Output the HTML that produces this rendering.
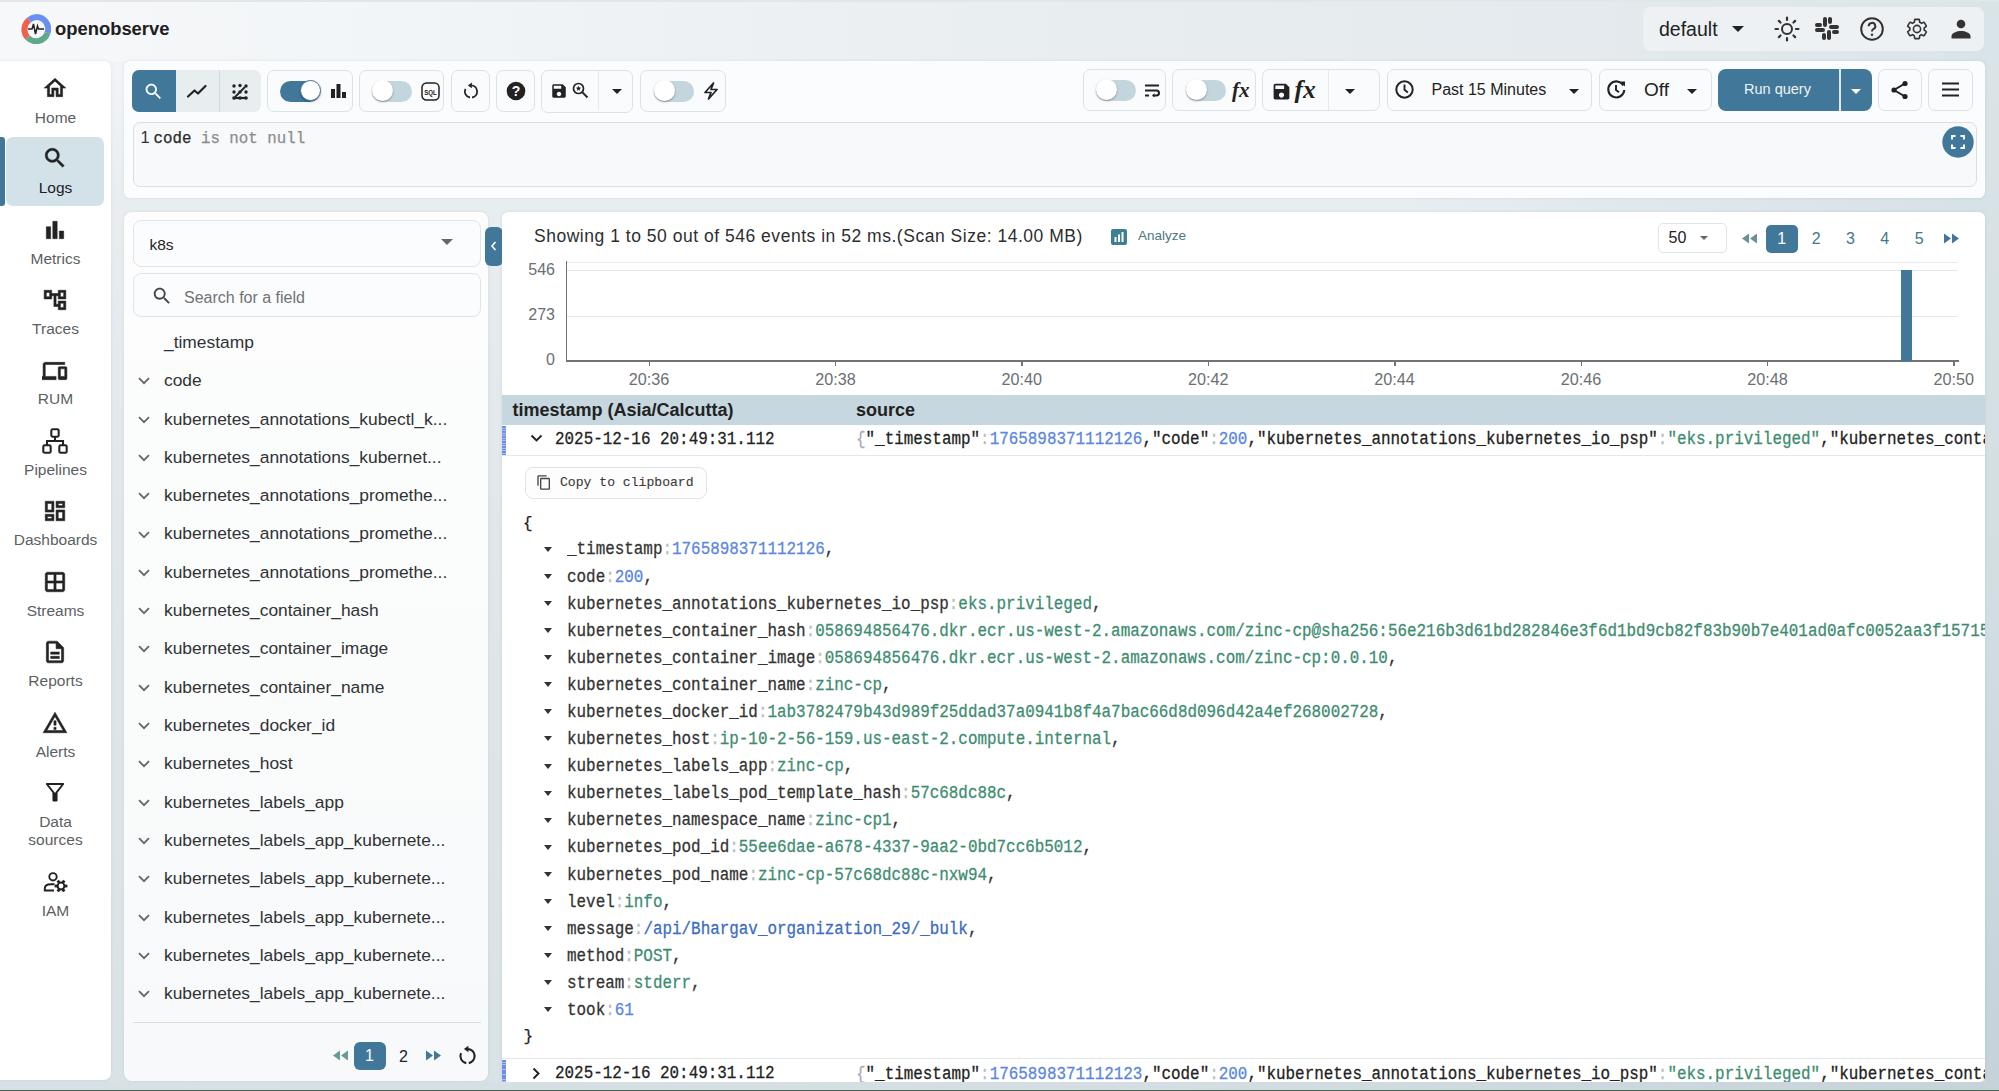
<!DOCTYPE html>
<html><head><meta charset="utf-8">
<style>
*{box-sizing:border-box;margin:0;padding:0}
html,body{width:1999px;height:1091px;overflow:hidden}
body{position:relative;background:linear-gradient(90deg,rgba(214,225,230,0) 70%,rgba(214,225,230,1) 100%),linear-gradient(180deg,#f7f9fa 0,#f2f5f7 60px,#e8edf0 200px,#e1e7ea 500px,#d9e2e6 1091px);font-family:"Liberation Sans",sans-serif;color:#222}
.a{position:absolute}
.mono{font-family:"Liberation Mono",monospace;-webkit-text-stroke:0.25px currentColor}
#hdr{left:0;top:0;width:1999px;height:61px;background:linear-gradient(90deg,#f6f8fa 0%,#f2f5f7 20%,#edf1f3 35%,#e8edf0 55%,#e4eaed 80%,#d9e4e9 100%);border-top:2px solid #e1e6e9}
#nav{left:0;top:60.5px;width:111px;height:1019.5px;background:#fff;border-radius:0 7px 7px 0;box-shadow:0 0 3px rgba(60,80,90,.12)}
.ni{position:absolute;left:0;width:111px;text-align:center;font-size:15.5px;color:#5c5f62}
.ni svg{position:absolute;left:45px;width:21px;height:21px}
#tb{left:124px;top:60.5px;width:1861px;height:137px;background:#fbfcfd;border-radius:6px;box-shadow:0 0 3px rgba(60,80,90,.12)}
.btn{position:absolute;top:70px;height:42px;border:1px solid #dbe3e7;border-radius:7px;background:#fafbfc}
#qe{left:133px;top:122px;width:1844px;height:65px;border:1.5px solid #d9e0e4;border-radius:7px;background:#f8f9fb}
#fp{left:124px;top:212px;width:364px;height:869px;background:linear-gradient(180deg,#fdfdfd 0%,#fbfcfc 35%,#f8f9fa 100%);border-radius:8px;box-shadow:0 0 3px rgba(60,80,90,.12)}
#rp{left:502px;top:211.5px;width:1483px;height:870.5px;background:#fff;border-radius:6px;box-shadow:0 0 3px rgba(60,80,90,.12)}
.fl{position:absolute;left:164px;font-size:17.4px;color:#303336;white-space:nowrap}
.chev{position:absolute;left:138px;width:12px;height:8px}
.tog{position:absolute;width:40px;height:21px;border-radius:11px;background:#c3d6de}
.tog .k{position:absolute;top:-0.5px;width:21px;height:21px;border-radius:50%;background:#fff;box-shadow:0 1px 2px rgba(0,0,0,.35)}
.jl{position:absolute;left:567px;max-width:1418px;overflow:hidden;font-size:15.92px;transform:scaleY(1.1);transform-origin:0 13.7px;white-space:pre;color:#333}
.jl .c{color:#b9bec2}
.jl .n{color:#5a86e0}
.jl .s{color:#3d8c70}
.jl .m{color:#3b6cc4}
.car{position:absolute;left:544px;width:0;height:0;border-left:4.5px solid transparent;border-right:4.5px solid transparent;border-top:5px solid #333}
</style></head><body>

<!-- header -->
<div id="hdr" class="a"></div>
<svg class="a" style="left:21px;top:14px" width="30" height="30" viewBox="0 0 30 30">
  <path d="M15 3 A12 12 0 0 1 26.5 19" stroke="#6b8ff0" stroke-width="6" fill="none"/>
  <path d="M26.5 19 A12 12 0 0 1 6.5 23.5" stroke="#5fa88a" stroke-width="6" fill="none"/>
  <path d="M6.5 23.5 A12 12 0 0 1 8 6" stroke="#f0604a" stroke-width="6" fill="none"/>
  <path d="M8 6 A12 12 0 0 1 15 3" stroke="#6b8ff0" stroke-width="6" fill="none"/>
  <path d="M7 15 H11 L12.5 10 L14.5 20 L16.5 12 L17.5 15 H23" stroke="#222" stroke-width="1.5" fill="none"/>
</svg>
<div class="a" style="left:55px;top:17.5px;font-size:18.4px;font-weight:bold;color:#1e2022;letter-spacing:0px">openobserve</div>

<div class="a" style="left:1643px;top:7px;width:341px;height:44px;background:#edf1f3;border-radius:8px"></div>
<div class="a" style="left:1659px;top:17.5px;font-size:19.5px;color:#222">default</div>
<div class="a" style="left:1732px;top:26px;width:0;height:0;border-left:6px solid transparent;border-right:6px solid transparent;border-top:6px solid #222"></div>

<svg class="a" style="left:1773.5px;top:16px" width="26" height="26" viewBox="0 0 26 26"><circle cx="13" cy="13" r="5" stroke="#333" stroke-width="2" fill="none"/><g stroke="#333" stroke-width="2.2" stroke-linecap="round"><path d="M13 1.5v2.5M13 22v2.5M1.5 13h2.5M22 13h2.5M4.9 4.9l1.6 1.6M19.5 19.5l1.6 1.6M4.9 21.1l1.6-1.6M19.5 6.5l1.6-1.6"/></g></svg>
<svg class="a" style="left:1815px;top:17px" width="24" height="23" viewBox="0 0 24 23" fill="#333"><rect x="8" y="0" width="4" height="10" rx="2"/><rect x="13" y="0" width="4" height="7" rx="2"/><rect x="14" y="8" width="10" height="4" rx="2"/><rect x="17" y="13" width="7" height="4" rx="2"/><rect x="12" y="13" width="4" height="10" rx="2"/><rect x="7" y="16" width="4" height="7" rx="2"/><rect x="0" y="11" width="10" height="4" rx="2"/><rect x="0" y="6" width="7" height="4" rx="2"/></svg>
<svg class="a" style="left:1860px;top:16.5px" width="24" height="24" viewBox="0 0 24 24"><circle cx="12" cy="12" r="10.8" stroke="#333" stroke-width="2" fill="none"/><path d="M8.7 9.2a3.3 3.3 0 1 1 4.6 3c-1 .5-1.3 1-1.3 2.3" stroke="#333" stroke-width="2" fill="none"/><circle cx="12" cy="17.8" r="1.2" fill="#333"/></svg>
<svg class="a" style="left:1904.5px;top:16.5px" width="24" height="24" viewBox="0 0 24 24"><path d="M19.14 12.94c.04-.3.06-.61.06-.94 0-.32-.02-.64-.07-.94l2.03-1.58c.18-.14.23-.41.12-.61l-1.92-3.32c-.12-.22-.37-.29-.59-.22l-2.39.96c-.5-.38-1.03-.7-1.62-.94l-.36-2.54c-.04-.24-.24-.41-.48-.41h-3.84c-.24 0-.43.17-.47.41l-.36 2.54c-.59.24-1.13.57-1.62.94l-2.39-.96c-.22-.08-.47 0-.59.22L2.74 8.87c-.12.21-.08.47.12.61l2.03 1.58c-.05.3-.09.63-.09.94s.02.64.07.94l-2.03 1.58c-.18.14-.23.41-.12.61l1.92 3.32c.12.22.37.29.59.22l2.39-.96c.5.38 1.03.7 1.62.94l.36 2.54c.05.24.24.41.48.41h3.84c.24 0 .44-.17.47-.41l.36-2.54c.59-.24 1.13-.56 1.62-.94l2.39.96c.22.08.47 0 .59-.22l1.92-3.32c.12-.22.07-.47-.12-.61l-2.01-1.58zM12 15.6c-1.98 0-3.6-1.62-3.6-3.6s1.62-3.6 3.6-3.6 3.6 1.62 3.6 3.6-1.62 3.6-3.6 3.6z" stroke="#333" stroke-width="1.6" fill="none"/></svg>
<svg class="a" style="left:1950.5px;top:19px" width="20" height="20" viewBox="0 0 20 20" fill="#333"><circle cx="10" cy="5" r="4.3"/><path d="M0.5 19.5v-2.5c0-3 5.5-5 9.5-5s9.5 2 9.5 5v2.5z"/></svg>

<div class="a" style="left:1985px;top:61px;width:14px;height:1030px;background:linear-gradient(180deg,#d9e3e8 0%,#d3dee3 50%,#c4d2d9 100%)"></div>
<!-- nav -->
<div id="nav" class="a"></div>
<div class="a" style="left:6px;top:137px;width:98px;height:69px;background:#d3e2e9;border-radius:7px"></div>
<div class="a" style="left:0;top:137px;width:5px;height:69px;background:#41789a;border-radius:0 3px 3px 0"></div>

<svg class="a" style="left:42px;top:75.0px" width="26" height="26" viewBox="0 0 24 24" fill="#222" stroke="#222" stroke-width="0.5"><path d="M12 5.69l5 4.5V18h-2v-6H9v6H7v-7.81l5-4.5M12 3L2 12h3v8h6v-6h2v6h6v-8h3L12 3z"/></svg>
<div class="a" style="left:0;width:111px;text-align:center;top:108.8px;font-size:15.5px;line-height:18px;color:#5c5f62">Home</div>
<svg class="a" style="left:42px;top:145.0px" width="26" height="26" viewBox="0 0 24 24" fill="#222" stroke="#222" stroke-width="0.5"><path d="M15.5 14h-.79l-.28-.27C15.41 12.59 16 11.11 16 9.5 16 5.91 13.09 3 9.5 3S3 5.91 3 9.5 5.91 16 9.5 16c1.61 0 3.09-.59 4.23-1.57l.27.28v.79l5 4.99L20.49 19l-4.99-5zm-6 0C7.01 14 5 11.99 5 9.5S7.01 5 9.5 5 14 7.01 14 9.5 11.99 14 9.5 14z"/></svg>
<div class="a" style="left:0;width:111px;text-align:center;top:179.2px;font-size:15.5px;line-height:18px;color:#1f2124">Logs</div>
<svg class="a" style="left:42px;top:216.5px" width="26" height="26" viewBox="0 0 24 24" fill="#222" stroke="#222" stroke-width="0.5"><path d="M4 9h4v11H4zM16 13h4v7h-4zM10 4h4v16h-4z"/></svg>
<div class="a" style="left:0;width:111px;text-align:center;top:249.8px;font-size:15.5px;line-height:18px;color:#5c5f62">Metrics</div>
<svg class="a" style="left:42px;top:287.0px" width="26" height="26" viewBox="0 0 24 24" fill="#222" stroke="#222" stroke-width="0.5"><path d="M22 11V3h-7v3H9V3H2v8h7V8h2v10h4v3h7v-8h-7v3h-2V8h2v3h7zM7 9H4V5h3v4zm10 6h3v4h-3v-4zm0-10h3v4h-3V5z"/></svg>
<div class="a" style="left:0;width:111px;text-align:center;top:319.8px;font-size:15.5px;line-height:18px;color:#5c5f62">Traces</div>
<svg class="a" style="left:42px;top:357.5px" width="26" height="26" viewBox="0 0 24 24" fill="#222" stroke="#222" stroke-width="0.5"><path d="M3 6h18V4H3c-1.1 0-2 .9-2 2v11H-1v3h14v-3H3V6zm19 2h-6c-.55 0-1 .45-1 1v10c0 .55.45 1 1 1h6c.55 0 1-.45 1-1V9c0-.55-.45-1-1-1zm-1 9h-4v-7h4v7z"/></svg>
<div class="a" style="left:0;width:111px;text-align:center;top:390.3px;font-size:15.5px;line-height:18px;color:#5c5f62">RUM</div>
<svg class="a" style="left:42px;top:428.0px" width="26" height="26" viewBox="0 0 24 24" fill="#222" stroke="#222" stroke-width="0.5"><g fill="none" stroke-width="1.9"><rect x="8.6" y="1.2" width="6.8" height="6.8" rx="1.2"/><rect x="1.2" y="16" width="6.8" height="6.8" rx="1.2"/><rect x="16" y="16" width="6.8" height="6.8" rx="1.2"/><path d="M12 8v4M4.6 16v-4h14.8v4"/></g></svg>
<div class="a" style="left:0;width:111px;text-align:center;top:460.8px;font-size:15.5px;line-height:18px;color:#5c5f62">Pipelines</div>
<svg class="a" style="left:42px;top:498.0px" width="26" height="26" viewBox="0 0 24 24" fill="#222" stroke="#222" stroke-width="0.5"><path d="M19 5v2h-4V5h4M9 5v6H5V5h4m10 8v6h-4v-6h4M9 17v2H5v-2h4M21 3h-8v6h8V3zM11 3H3v10h8V3zm10 8h-8v10h8V11zm-10 4H3v6h8v-6z"/></svg>
<div class="a" style="left:0;width:111px;text-align:center;top:531.3px;font-size:15.5px;line-height:18px;color:#5c5f62">Dashboards</div>
<svg class="a" style="left:42px;top:569.0px" width="26" height="26" viewBox="0 0 24 24" fill="#222" stroke="#222" stroke-width="0.5"><path d="M5 3h14c1.1 0 2 .9 2 2v14c0 1.1-.9 2-2 2H5c-1.1 0-2-.9-2-2V5c0-1.1.9-2 2-2zm0 2v6h6V5zm8 0v6h6V5zm-8 8v6h6v-6zm8 0v6h6v-6z"/></svg>
<div class="a" style="left:0;width:111px;text-align:center;top:601.8px;font-size:15.5px;line-height:18px;color:#5c5f62">Streams</div>
<svg class="a" style="left:42px;top:639.0px" width="26" height="26" viewBox="0 0 24 24" fill="#222" stroke="#222" stroke-width="0.5"><path d="M8 16h8v2H8zm0-4h8v2H8zm6-10H6c-1.1 0-2 .9-2 2v16c0 1.1.89 2 1.99 2H18c1.1 0 2-.9 2-2V8l-6-6zm4 18H6V4h7v5h5v11z"/></svg>
<div class="a" style="left:0;width:111px;text-align:center;top:672.3px;font-size:15.5px;line-height:18px;color:#5c5f62">Reports</div>
<svg class="a" style="left:42px;top:709.5px" width="26" height="26" viewBox="0 0 24 24" fill="#222" stroke="#222" stroke-width="0.5"><path d="M12 5.99L19.53 19H4.47L12 5.99M12 2L1 21h22L12 2zm1 14h-2v2h2v-2zm0-6h-2v4h2v-4z"/></svg>
<div class="a" style="left:0;width:111px;text-align:center;top:742.8px;font-size:15.5px;line-height:18px;color:#5c5f62">Alerts</div>
<svg class="a" style="left:44px;top:781px" width="22" height="22" viewBox="0 0 22 22"><path d="M2.8 3 H19.2 L12.6 11.4 V19.5 H9.4 V11.4 Z" stroke="#222" stroke-width="1.9" stroke-linejoin="round" fill="none"/><rect x="9.4" y="11.5" width="3.2" height="8.2" fill="#222"/></svg>
<div class="a" style="left:0;width:111px;text-align:center;top:813.3px;font-size:15.5px;line-height:18px;color:#5c5f62">Data</div>
<div class="a" style="left:0;width:111px;text-align:center;top:831.3px;font-size:15.5px;line-height:18px;color:#5c5f62">sources</div>
<svg class="a" style="left:40px;top:868px" width="30" height="28" viewBox="0 0 30 28"><circle cx="13" cy="8.8" r="3.7" stroke="#222" stroke-width="1.9" fill="none"/><path d="M14.5 16.2 H11 C7 16.2 4.8 18 4.8 20.5 V22.5 H14" stroke="#222" stroke-width="1.9" fill="none"/><circle cx="21" cy="18" r="3.4" stroke="#222" stroke-width="2" fill="none"/><g fill="#222"><rect x="19.6" y="11.6" width="2.8" height="2.8" transform="rotate(90 21 18)"/><rect x="19.6" y="11.6" width="2.8" height="2.8" transform="rotate(150 21 18)"/><rect x="19.6" y="11.6" width="2.8" height="2.8" transform="rotate(210 21 18)"/><rect x="19.6" y="11.6" width="2.8" height="2.8" transform="rotate(270 21 18)"/><rect x="19.6" y="11.6" width="2.8" height="2.8" transform="rotate(330 21 18)"/><rect x="19.6" y="11.6" width="2.8" height="2.8" transform="rotate(390 21 18)"/></g></svg>
<div class="a" style="left:0;width:111px;text-align:center;top:902.3px;font-size:15.5px;line-height:18px;color:#5c5f62">IAM</div>

<!-- toolbar panel -->
<div id="tb" class="a"></div>
<div id="qe" class="a"></div>
<div class="a" style="left:140.5px;top:127.5px;font-size:16.5px;line-height:19px;color:#333">1</div><div class="a mono" style="left:153.5px;top:129.5px;font-size:15.8px;line-height:18px;color:#2a2a2a;white-space:pre">code <span style="color:#8a8d90">is not null</span></div>


<!-- toolbar buttons -->
<div class="a" style="left:132px;top:70px;width:129px;height:42px;background:#e8edf0;border-radius:7px;overflow:hidden">
  <div class="a" style="left:0;top:0;width:43.5px;height:42px;background:#41789a"></div>
  <div class="a" style="left:87px;top:0;width:1px;height:42px;background:#cfd8dc"></div>
</div>
<svg class="a" style="left:143px;top:81px" width="21" height="21" viewBox="0 0 24 24" fill="#fff"><path d="M15.5 14h-.79l-.28-.27C15.41 12.59 16 11.11 16 9.5 16 5.91 13.09 3 9.5 3S3 5.91 3 9.5 5.91 16 9.5 16c1.61 0 3.09-.59 4.23-1.57l.27.28v.79l5 4.99L20.49 19l-4.99-5zm-6 0C7.01 14 5 11.99 5 9.5S7.01 5 9.5 5 14 7.01 14 9.5 11.99 14 9.5 14z"/></svg>
<svg class="a" style="left:186px;top:83px" width="22" height="16" viewBox="0 0 22 16"><path d="M2 13.5 L8.5 7.5 L12 10.5 L19.5 3" stroke="#222" stroke-width="2.2" fill="none" stroke-linecap="round" stroke-linejoin="round"/></svg>
<svg class="a" style="left:231px;top:83px" width="18" height="17" viewBox="0 0 18 17" fill="#222"><circle cx="3" cy="3" r="1.7"/><circle cx="9" cy="2.5" r="1.7"/><circle cx="15" cy="3" r="1.7"/><circle cx="3" cy="9" r="1.7"/><circle cx="9" cy="9" r="1.7"/><circle cx="15" cy="9" r="1.7"/><path d="M2 15 H16" stroke="#222" stroke-width="2.2"/><path d="M4 14 L14 4" stroke="#222" stroke-width="1.8"/><circle cx="3" cy="15" r="1.8"/><circle cx="9" cy="15" r="1.8"/><circle cx="15" cy="15" r="1.8"/></svg>

<div class="btn" style="left:267px;width:86px;height:42px"></div>
<div class="tog" style="left:280px;top:80.5px;background:#41789a"><div class="k" style="left:19.5px;border:1px solid #41789a"></div></div>
<svg class="a" style="left:331px;top:84px" width="15" height="14" viewBox="0 0 15 14" fill="#222"><rect x="0" y="5" width="4" height="9"/><rect x="5.5" y="0" width="4" height="14"/><rect x="11" y="8" width="4" height="6"/></svg>

<div class="btn" style="left:359px;width:85px"></div>
<div class="tog" style="left:372px;top:80.5px"><div class="k" style="left:0"></div></div>
<svg class="a" style="left:421px;top:82px" width="19" height="19" viewBox="0 0 19 19"><rect x="1" y="1" width="17" height="17" rx="4.5" stroke="#222" stroke-width="1.5" fill="none"/><text x="3.2" y="12.6" font-family="Liberation Sans" font-weight="bold" font-size="7.2" textLength="12.6" lengthAdjust="spacingAndGlyphs" fill="#222">SQL</text></svg>

<div class="btn" style="left:451px;width:39px"></div>
<svg class="a" style="left:462px;top:82px" width="18" height="18" viewBox="0 0 18 18"><path d="M9.00 3.40 A6.1 6.1 0 0 1 10.06 15.51 M7.94 15.51 A6.1 6.1 0 0 1 3.47 6.92" stroke="#222" stroke-width="1.8" fill="none"/><path d="M5.9 3.4 L9.8 0.6 L9.8 6.2Z" fill="#222"/></svg>

<div class="btn" style="left:496px;width:39px"></div>
<svg class="a" style="left:506px;top:81px" width="20" height="20" viewBox="0 0 20 20"><circle cx="10" cy="10" r="9.3" fill="#222"/><text x="10" y="15" font-family="Liberation Sans" font-weight="bold" font-size="14" text-anchor="middle" fill="#fff">?</text></svg>

<div class="btn" style="left:541px;width:92px;top:69.5px;height:43px"></div>
<div class="a" style="left:598px;top:71px;width:1px;height:40px;background:#e3e9ec"></div>
<svg class="a" style="left:550px;top:82px" width="18" height="18" viewBox="0 0 24 24" fill="#222"><path d="M17 3H5c-1.11 0-2 .9-2 2v14c0 1.1.89 2 2 2h14c1.1 0 2-.9 2-2V7l-4-4zm-5 16c-1.66 0-3-1.34-3-3s1.34-3 3-3 3 1.34 3 3-1.34 3-3 3zm3-10H5V5h10v4z"/></svg>
<svg class="a" style="left:572px;top:82px" width="17" height="17" viewBox="0 0 17 17"><circle cx="6.5" cy="6.5" r="5" stroke="#222" stroke-width="1.7" fill="none"/><path d="M10.2 10.2 L15.5 15.5" stroke="#222" stroke-width="1.9"/><path d="M6.5 3.8 L7.3 5.6 L9.2 5.7 L7.7 6.9 L8.2 8.8 L6.5 7.8 L4.8 8.8 L5.3 6.9 L3.8 5.7 L5.7 5.6Z" fill="#222"/></svg>
<div class="a" style="left:611.5px;top:89px;width:0;height:0;border-left:5px solid transparent;border-right:5px solid transparent;border-top:5px solid #222"></div>

<div class="btn" style="left:640px;width:86px"></div>
<div class="tog" style="left:653.5px;top:80.5px"><div class="k" style="left:0"></div></div>
<svg class="a" style="left:703px;top:82px" width="16" height="18" viewBox="0 0 16 18"><path d="M10.5 1 L2 10.5 H8 L5.5 17 L14 7.5 H8 Z" stroke="#222" stroke-width="1.7" fill="none" stroke-linejoin="round"/></svg>

<!-- right side -->
<div class="btn" style="left:1083px;width:83px;top:69px;height:41.5px"></div>
<div class="tog" style="left:1096px;top:79.5px"><div class="k" style="left:0"></div></div>
<svg class="a" style="left:1144px;top:84px" width="16" height="13" viewBox="0 0 16 13"><path d="M1 1.5 H15 M1 6.5 H12.5 a2.5 2.5 0 0 1 0 5 H9.5 M1 11.5 H5" stroke="#222" stroke-width="2" fill="none"/><path d="M10.5 9.3 L8 11.5 L10.5 13.7Z" fill="#222"/></svg>

<div class="btn" style="left:1172px;width:84px;top:69px;height:41.5px"></div>
<div class="tog" style="left:1185.5px;top:79.5px"><div class="k" style="left:0"></div></div>
<div class="a" style="left:1232px;top:78px;font-family:'Liberation Serif',serif;font-style:italic;font-weight:bold;font-size:21px;color:#222;line-height:24px">fx</div>

<div class="btn" style="left:1262px;width:118px;top:69px;height:41.5px"></div>
<div class="a" style="left:1327.5px;top:70px;width:1px;height:40px;background:#e3e9ec"></div>
<svg class="a" style="left:1271px;top:81px" width="21" height="21" viewBox="0 0 24 24" fill="#222"><path d="M17 3H5c-1.11 0-2 .9-2 2v14c0 1.1.89 2 2 2h14c1.1 0 2-.9 2-2V7l-4-4zm-5 16c-1.66 0-3-1.34-3-3s1.34-3 3-3 3 1.34 3 3-1.34 3-3 3zm3-10H5V5h10v4z"/></svg>
<div class="a" style="left:1294.5px;top:75.5px;font-family:'Liberation Serif',serif;font-style:italic;font-weight:bold;font-size:25.5px;color:#222;line-height:27px">fx</div>
<div class="a" style="left:1345px;top:89px;width:0;height:0;border-left:5px solid transparent;border-right:5px solid transparent;border-top:5px solid #222"></div>

<div class="btn" style="left:1386.5px;width:205.5px;top:69px;height:41.8px"></div>
<svg class="a" style="left:1395px;top:80px" width="19" height="19" viewBox="0 0 19 19"><circle cx="9.5" cy="9.5" r="8.2" stroke="#222" stroke-width="2" fill="none"/><path d="M9.5 4.5 V9.8 L12.8 12.5" stroke="#222" stroke-width="1.9" fill="none"/></svg>
<div class="a" style="left:1431.5px;top:80px;font-size:16px;line-height:19px;color:#222">Past 15 Minutes</div>
<div class="a" style="left:1569px;top:89px;width:0;height:0;border-left:5px solid transparent;border-right:5px solid transparent;border-top:5px solid #222"></div>

<div class="btn" style="left:1598.5px;width:113px;top:69px;height:41.8px"></div>
<svg class="a" style="left:1606px;top:79px" width="21" height="21" viewBox="0 0 21 21"><path d="M17.3 6.5 A8 8 0 1 0 18.3 11" stroke="#222" stroke-width="2.1" fill="none"/><path d="M14.5 2.5 L19 2.5 L19 7.5 Z" fill="#222"/><path d="M10 6 V11 L13 13.3" stroke="#222" stroke-width="1.9" fill="none"/></svg>
<div class="a" style="left:1644px;top:79px;font-size:19px;line-height:22px;color:#222">Off</div>
<div class="a" style="left:1687px;top:89px;width:0;height:0;border-left:5px solid transparent;border-right:5px solid transparent;border-top:5px solid #222"></div>

<div class="a" style="left:1717.5px;top:68.5px;width:154px;height:42.5px;background:#41789a;border-radius:8px"></div>
<div class="a" style="left:1839px;top:68.5px;width:1.5px;height:42.5px;background:#dfe8ec"></div>
<div class="a" style="left:1744px;top:81px;font-size:14.5px;line-height:17px;color:#eef3f5">Run query</div>
<div class="a" style="left:1851px;top:88.5px;width:0;height:0;border-left:5px solid transparent;border-right:5px solid transparent;border-top:5px solid #fff"></div>

<div class="btn" style="left:1878px;width:44px;top:69px;height:42px"></div>
<svg class="a" style="left:1890px;top:80px" width="20" height="20" viewBox="0 0 20 20" fill="#222"><circle cx="15" cy="3.5" r="2.6"/><circle cx="4" cy="10" r="2.6"/><circle cx="15" cy="16.5" r="2.6"/><path d="M15 3.5 L4 10 L15 16.5" stroke="#222" stroke-width="2" fill="none"/></svg>
<div class="btn" style="left:1928px;width:44.5px;top:69px;height:42px"></div>
<svg class="a" style="left:1942px;top:82px" width="17" height="15" viewBox="0 0 17 15" fill="#222"><rect x="0" y="0.5" width="17" height="2"/><rect x="0" y="6.5" width="17" height="2"/><rect x="0" y="12.5" width="17" height="2"/></svg>

<svg class="a" style="left:1942px;top:125.5px" width="32" height="32" viewBox="0 0 32 32"><circle cx="16" cy="16" r="15.7" fill="#41789a"/><path d="M10 13.5 V10 H13.5 M18.5 10 H22 V13.5 M22 18.5 V22 H18.5 M13.5 22 H10 V18.5" stroke="#fff" stroke-width="1.9" fill="none"/></svg>

<!-- field panel -->
<div id="fp" class="a"></div>

<div class="a" style="left:132.5px;top:220px;width:348px;height:46.5px;border:1px solid #dfe5e8;border-radius:8px;background:#fbfcfd"></div>
<div class="a" style="left:149.5px;top:236px;font-size:15.5px;line-height:18px;color:#222">k8s</div>
<div class="a" style="left:441px;top:239px;width:0;height:0;border-left:6px solid transparent;border-right:6px solid transparent;border-top:6.5px solid #666"></div>
<div class="a" style="left:132.5px;top:273px;width:348px;height:44px;border:1px solid #dfe5e8;border-radius:8px;background:#fbfcfd"></div>
<svg class="a" style="left:151px;top:285px" width="22" height="22" viewBox="0 0 24 24" fill="#444"><path d="M15.5 14h-.79l-.28-.27C15.41 12.59 16 11.11 16 9.5 16 5.91 13.09 3 9.5 3S3 5.91 3 9.5 5.91 16 9.5 16c1.61 0 3.09-.59 4.23-1.57l.27.28v.79l5 4.99L20.49 19l-4.99-5zm-6 0C7.01 14 5 11.99 5 9.5S7.01 5 9.5 5 14 7.01 14 9.5 11.99 14 9.5 14z"/></svg>
<div class="a" style="left:184px;top:288.5px;font-size:16px;line-height:18px;color:#6f7376">Search for a field</div>
<div class="fl" style="top:331.8px;line-height:20px">_timestamp</div>
<svg class="a" style="left:138px;top:377.3px" width="12" height="8" viewBox="0 0 12 8"><path d="M1 1.2 L6 6.2 L11 1.2" stroke="#666" stroke-width="1.8" fill="none"/></svg>
<div class="fl" style="top:370.1px;line-height:20px">code</div>
<svg class="a" style="left:138px;top:415.6px" width="12" height="8" viewBox="0 0 12 8"><path d="M1 1.2 L6 6.2 L11 1.2" stroke="#666" stroke-width="1.8" fill="none"/></svg>
<div class="fl" style="top:408.5px;line-height:20px">kubernetes_annotations_kubectl_k...</div>
<svg class="a" style="left:138px;top:453.9px" width="12" height="8" viewBox="0 0 12 8"><path d="M1 1.2 L6 6.2 L11 1.2" stroke="#666" stroke-width="1.8" fill="none"/></svg>
<div class="fl" style="top:446.8px;line-height:20px">kubernetes_annotations_kubernet...</div>
<svg class="a" style="left:138px;top:492.2px" width="12" height="8" viewBox="0 0 12 8"><path d="M1 1.2 L6 6.2 L11 1.2" stroke="#666" stroke-width="1.8" fill="none"/></svg>
<div class="fl" style="top:485.1px;line-height:20px">kubernetes_annotations_promethe...</div>
<svg class="a" style="left:138px;top:530.5px" width="12" height="8" viewBox="0 0 12 8"><path d="M1 1.2 L6 6.2 L11 1.2" stroke="#666" stroke-width="1.8" fill="none"/></svg>
<div class="fl" style="top:523.4px;line-height:20px">kubernetes_annotations_promethe...</div>
<svg class="a" style="left:138px;top:568.8px" width="12" height="8" viewBox="0 0 12 8"><path d="M1 1.2 L6 6.2 L11 1.2" stroke="#666" stroke-width="1.8" fill="none"/></svg>
<div class="fl" style="top:561.8px;line-height:20px">kubernetes_annotations_promethe...</div>
<svg class="a" style="left:138px;top:607.1px" width="12" height="8" viewBox="0 0 12 8"><path d="M1 1.2 L6 6.2 L11 1.2" stroke="#666" stroke-width="1.8" fill="none"/></svg>
<div class="fl" style="top:600.1px;line-height:20px">kubernetes_container_hash</div>
<svg class="a" style="left:138px;top:645.4px" width="12" height="8" viewBox="0 0 12 8"><path d="M1 1.2 L6 6.2 L11 1.2" stroke="#666" stroke-width="1.8" fill="none"/></svg>
<div class="fl" style="top:638.4px;line-height:20px">kubernetes_container_image</div>
<svg class="a" style="left:138px;top:683.7px" width="12" height="8" viewBox="0 0 12 8"><path d="M1 1.2 L6 6.2 L11 1.2" stroke="#666" stroke-width="1.8" fill="none"/></svg>
<div class="fl" style="top:676.8px;line-height:20px">kubernetes_container_name</div>
<svg class="a" style="left:138px;top:722.0px" width="12" height="8" viewBox="0 0 12 8"><path d="M1 1.2 L6 6.2 L11 1.2" stroke="#666" stroke-width="1.8" fill="none"/></svg>
<div class="fl" style="top:715.1px;line-height:20px">kubernetes_docker_id</div>
<svg class="a" style="left:138px;top:760.3px" width="12" height="8" viewBox="0 0 12 8"><path d="M1 1.2 L6 6.2 L11 1.2" stroke="#666" stroke-width="1.8" fill="none"/></svg>
<div class="fl" style="top:753.4px;line-height:20px">kubernetes_host</div>
<svg class="a" style="left:138px;top:798.6px" width="12" height="8" viewBox="0 0 12 8"><path d="M1 1.2 L6 6.2 L11 1.2" stroke="#666" stroke-width="1.8" fill="none"/></svg>
<div class="fl" style="top:791.8px;line-height:20px">kubernetes_labels_app</div>
<svg class="a" style="left:138px;top:836.9px" width="12" height="8" viewBox="0 0 12 8"><path d="M1 1.2 L6 6.2 L11 1.2" stroke="#666" stroke-width="1.8" fill="none"/></svg>
<div class="fl" style="top:830.1px;line-height:20px">kubernetes_labels_app_kubernete...</div>
<svg class="a" style="left:138px;top:875.2px" width="12" height="8" viewBox="0 0 12 8"><path d="M1 1.2 L6 6.2 L11 1.2" stroke="#666" stroke-width="1.8" fill="none"/></svg>
<div class="fl" style="top:868.4px;line-height:20px">kubernetes_labels_app_kubernete...</div>
<svg class="a" style="left:138px;top:913.5px" width="12" height="8" viewBox="0 0 12 8"><path d="M1 1.2 L6 6.2 L11 1.2" stroke="#666" stroke-width="1.8" fill="none"/></svg>
<div class="fl" style="top:906.7px;line-height:20px">kubernetes_labels_app_kubernete...</div>
<svg class="a" style="left:138px;top:951.8px" width="12" height="8" viewBox="0 0 12 8"><path d="M1 1.2 L6 6.2 L11 1.2" stroke="#666" stroke-width="1.8" fill="none"/></svg>
<div class="fl" style="top:945.1px;line-height:20px">kubernetes_labels_app_kubernete...</div>
<svg class="a" style="left:138px;top:990.1px" width="12" height="8" viewBox="0 0 12 8"><path d="M1 1.2 L6 6.2 L11 1.2" stroke="#666" stroke-width="1.8" fill="none"/></svg>
<div class="fl" style="top:983.4px;line-height:20px">kubernetes_labels_app_kubernete...</div>
<div class="a" style="left:132.5px;top:1021.5px;width:348px;height:1px;background:#d8dde0"></div>
<svg class="a" style="left:332px;top:1050px" width="17" height="11" viewBox="0 0 17 11" fill="#6a9a94"><path d="M8 0.5 L1 5.5 L8 10.5Z M16 0.5 L9 5.5 L16 10.5Z"/></svg>
<div class="a" style="left:353.5px;top:1041.5px;width:32px;height:28.5px;background:#41789a;border-radius:6px;color:#fff;font-size:16px;line-height:28.5px;text-align:center">1</div>
<div class="a" style="left:399px;top:1046.5px;font-size:16px;line-height:19px;color:#222">2</div>
<svg class="a" style="left:425px;top:1050px" width="17" height="11" viewBox="0 0 17 11" fill="#41789a"><path d="M1 0.5 L8 5.5 L1 10.5Z M9 0.5 L16 5.5 L9 10.5Z"/></svg>
<svg class="a" style="left:457px;top:1045px" width="21" height="21" viewBox="0 0 18 18"><path d="M9.00 3.40 A6.1 6.1 0 0 1 10.06 15.51 M7.94 15.51 A6.1 6.1 0 0 1 3.47 6.92" stroke="#222" stroke-width="1.8" fill="none"/><path d="M5.9 3.4 L9.8 0.6 L9.8 6.2Z" fill="#222"/></svg>
<div class="a" style="left:485px;top:226.5px;width:17.5px;height:39px;background:#41789a;border-radius:6px"></div>
<svg class="a" style="left:489px;top:240px" width="10" height="12" viewBox="0 0 10 12"><path d="M6.5 2 L3 6 L6.5 10" stroke="#fff" stroke-width="1.6" fill="none"/></svg>

<!-- results panel -->
<div id="rp" class="a"></div>

<div class="a" style="left:534px;top:226px;font-size:17.5px;line-height:20px;letter-spacing:0.52px;color:#2b2e31;white-space:nowrap">Showing 1 to 50 out of 546 events in 52 ms.(Scan Size: 14.00 MB)</div>
<svg class="a" style="left:1111px;top:229px" width="16" height="16" viewBox="0 0 16 16"><rect x="0" y="0" width="16" height="16" rx="2" fill="#3f7f94"/><rect x="3.5" y="8" width="2" height="5" fill="#fff"/><rect x="7" y="5.5" width="2" height="7.5" fill="#fff"/><rect x="10.5" y="3" width="2" height="10" fill="#fff"/></svg>
<div class="a" style="left:1138px;top:228px;font-size:13.5px;line-height:16px;color:#4a7882">Analyze</div>
<div class="a" style="left:1657.5px;top:223px;width:69px;height:29.5px;border:1px solid #dfe5e8;border-radius:5px"></div>
<div class="a" style="left:1668.5px;top:228px;font-size:16px;line-height:19px;color:#222">50</div>
<div class="a" style="left:1699.5px;top:235.5px;width:0;height:0;border-left:4.5px solid transparent;border-right:4.5px solid transparent;border-top:4.5px solid #666"></div>
<svg class="a" style="left:1741px;top:233px" width="17" height="11" viewBox="0 0 17 11" fill="#6a8f98"><path d="M8 0.5 L1 5.5 L8 10.5Z M16 0.5 L9 5.5 L16 10.5Z"/></svg>
<div class="a" style="left:1766px;top:224.5px;width:31.5px;height:28px;background:#41789a;border-radius:5px;color:#fff;font-size:16px;line-height:28px;text-align:center">1</div>
<div class="a" style="left:1806.3px;width:20px;text-align:center;top:229px;font-size:16px;line-height:19px;color:#3f7a8c">2</div>
<div class="a" style="left:1840.4px;width:20px;text-align:center;top:229px;font-size:16px;line-height:19px;color:#3f7a8c">3</div>
<div class="a" style="left:1874.8px;width:20px;text-align:center;top:229px;font-size:16px;line-height:19px;color:#3f7a8c">4</div>
<div class="a" style="left:1909.3px;width:20px;text-align:center;top:229px;font-size:16px;line-height:19px;color:#3f7a8c">5</div>
<svg class="a" style="left:1943px;top:233px" width="17" height="11" viewBox="0 0 17 11" fill="#41789a"><path d="M1 0.5 L8 5.5 L1 10.5Z M9 0.5 L16 5.5 L9 10.5Z"/></svg>
<div class="a" style="left:566px;top:261.5px;width:1392px;height:1px;background:#e6ebee"></div>
<div class="a" style="left:566px;top:270px;width:1392px;height:1px;background:#e3e8eb"></div>
<div class="a" style="left:566px;top:315.5px;width:1392px;height:1px;background:#e3e8eb"></div>
<div class="a" style="left:565.5px;top:261px;width:1.5px;height:100px;background:#6e7479"></div>
<div class="a" style="left:565.5px;top:360px;width:1393px;height:1.5px;background:#6e7479"></div>
<div class="a" style="left:500px;width:55px;text-align:right;top:260.5px;font-size:16px;line-height:18px;color:#6b6f73">546</div>
<div class="a" style="left:500px;width:55px;text-align:right;top:305.5px;font-size:16px;line-height:18px;color:#6b6f73">273</div>
<div class="a" style="left:500px;width:55px;text-align:right;top:350.5px;font-size:16px;line-height:18px;color:#6b6f73">0</div>
<div class="a" style="left:648.5px;top:361px;width:1.5px;height:5px;background:#6e7479"></div>
<div class="a" style="left:609.0px;width:80px;text-align:center;top:369.5px;font-size:16.2px;line-height:18px;color:#6b6f73">20:36</div>
<div class="a" style="left:834.9px;top:361px;width:1.5px;height:5px;background:#6e7479"></div>
<div class="a" style="left:795.4px;width:80px;text-align:center;top:369.5px;font-size:16.2px;line-height:18px;color:#6b6f73">20:38</div>
<div class="a" style="left:1021.3px;top:361px;width:1.5px;height:5px;background:#6e7479"></div>
<div class="a" style="left:981.8px;width:80px;text-align:center;top:369.5px;font-size:16.2px;line-height:18px;color:#6b6f73">20:40</div>
<div class="a" style="left:1207.7px;top:361px;width:1.5px;height:5px;background:#6e7479"></div>
<div class="a" style="left:1168.2px;width:80px;text-align:center;top:369.5px;font-size:16.2px;line-height:18px;color:#6b6f73">20:42</div>
<div class="a" style="left:1394.1px;top:361px;width:1.5px;height:5px;background:#6e7479"></div>
<div class="a" style="left:1354.6px;width:80px;text-align:center;top:369.5px;font-size:16.2px;line-height:18px;color:#6b6f73">20:44</div>
<div class="a" style="left:1580.5px;top:361px;width:1.5px;height:5px;background:#6e7479"></div>
<div class="a" style="left:1541.0px;width:80px;text-align:center;top:369.5px;font-size:16.2px;line-height:18px;color:#6b6f73">20:46</div>
<div class="a" style="left:1766.9px;top:361px;width:1.5px;height:5px;background:#6e7479"></div>
<div class="a" style="left:1727.4px;width:80px;text-align:center;top:369.5px;font-size:16.2px;line-height:18px;color:#6b6f73">20:48</div>
<div class="a" style="left:1953.3px;top:361px;width:1.5px;height:5px;background:#6e7479"></div>
<div class="a" style="left:1913.8px;width:80px;text-align:center;top:369.5px;font-size:16.2px;line-height:18px;color:#6b6f73">20:50</div>
<div class="a" style="left:1901px;top:269.5px;width:11px;height:91px;background:#41789a"></div>
<div class="a" style="left:502px;top:394.5px;width:1483px;height:30px;background:#c6d7e0"></div>
<div class="a" style="left:512.5px;top:400px;font-size:18px;line-height:21px;font-weight:bold;color:#222;white-space:nowrap">timestamp (Asia/Calcutta)</div>
<div class="a" style="left:856px;top:400px;font-size:18px;line-height:21px;font-weight:bold;color:#222">source</div>
<div class="a" style="left:502px;top:454.5px;width:1483px;height:1px;background:#e3e8eb"></div>
<div class="a" style="left:502px;top:425.5px;width:4px;height:29px;background:repeating-linear-gradient(180deg,#6d8de6 0 1.5px,#a9bdf2 1.5px 2.5px)"></div>
<svg class="a" style="left:530px;top:434px" width="13" height="9" viewBox="0 0 13 9"><path d="M1.5 1.5 L6.5 6.5 L11.5 1.5" stroke="#222" stroke-width="1.9" fill="none"/></svg>
<div class="a mono" style="left:555px;top:430.5px;font-size:15.92px;transform:scaleY(1.1);transform-origin:0 13.7px;line-height:19px;color:#222;white-space:pre">2025-12-16 20:49:31.112</div>
<div class="a" style="left:856px;top:425px;width:1129px;height:29px;overflow:hidden"><div class="jl mono" style="left:0;top:6.3px;line-height:19px;color:#222"><span style="color:#aab">{</span>"_timestamp"<span class="c">:</span><span class="n">1765898371112126</span>,"code"<span class="c">:</span><span class="n">200</span>,"kubernetes_annotations_kubernetes_io_psp"<span class="c">:</span><span class="s">"eks.privileged"</span>,"kubernetes_container_hash"<span class="c">:</span><span class="s">"058694856476.dkr.ecr.us-west-2.amazonaws.com/zinc-cp@sha256:56e216b3d61bd282846e3f6d1bd9cb82f83b90b7e401ad0afc0052aa3f15715"</span></div></div>
<div class="a" style="left:524.5px;top:466.5px;width:182px;height:32px;border:1px solid #dde3e7;border-radius:8px;background:#fdfdfe"></div>
<svg class="a" style="left:536px;top:474px" width="16" height="17" viewBox="0 0 24 24" fill="#444"><path d="M16 1H4c-1.1 0-2 .9-2 2v14h2V3h12V1zm3 4H8c-1.1 0-2 .9-2 2v14c0 1.1.9 2 2 2h11c1.1 0 2-.9 2-2V7c0-1.1-.9-2-2-2zm0 16H8V7h11v14z"/></svg>
<div class="a mono" style="left:560px;top:474.5px;font-size:13.1px;line-height:16px;color:#3a3a3a;white-space:pre;-webkit-text-stroke:0.1px currentColor">Copy to clipboard</div>
<div class="a mono" style="left:523px;top:515px;font-size:15.9px;line-height:19px;color:#222">{</div>
<div class="car" style="top:546.8px"></div>
<div class="jl mono" style="top:541.4px;line-height:19px">_timestamp<span class="c">:</span><span class="n">1765898371112126</span>,</div>
<div class="car" style="top:573.9px"></div>
<div class="jl mono" style="top:568.5px;line-height:19px">code<span class="c">:</span><span class="n">200</span>,</div>
<div class="car" style="top:601.0px"></div>
<div class="jl mono" style="top:595.6px;line-height:19px">kubernetes_annotations_kubernetes_io_psp<span class="c">:</span><span class="s">eks.privileged</span>,</div>
<div class="car" style="top:628.1px"></div>
<div class="jl mono" style="top:622.7px;line-height:19px">kubernetes_container_hash<span class="c">:</span><span class="s">058694856476.dkr.ecr.us-west-2.amazonaws.com/zinc-cp@sha256:56e216b3d61bd282846e3f6d1bd9cb82f83b90b7e401ad0afc0052aa3f15715e</span>,</div>
<div class="car" style="top:655.2px"></div>
<div class="jl mono" style="top:649.8px;line-height:19px">kubernetes_container_image<span class="c">:</span><span class="s">058694856476.dkr.ecr.us-west-2.amazonaws.com/zinc-cp:0.0.10</span>,</div>
<div class="car" style="top:682.2px"></div>
<div class="jl mono" style="top:676.8px;line-height:19px">kubernetes_container_name<span class="c">:</span><span class="s">zinc-cp</span>,</div>
<div class="car" style="top:709.3px"></div>
<div class="jl mono" style="top:703.9px;line-height:19px">kubernetes_docker_id<span class="c">:</span><span class="s">1ab3782479b43d989f25ddad37a0941b8f4a7bac66d8d096d42a4ef268002728</span>,</div>
<div class="car" style="top:736.4px"></div>
<div class="jl mono" style="top:731.0px;line-height:19px">kubernetes_host<span class="c">:</span><span class="s">ip-10-2-56-159.us-east-2.compute.internal</span>,</div>
<div class="car" style="top:763.5px"></div>
<div class="jl mono" style="top:758.1px;line-height:19px">kubernetes_labels_app<span class="c">:</span><span class="s">zinc-cp</span>,</div>
<div class="car" style="top:790.6px"></div>
<div class="jl mono" style="top:785.2px;line-height:19px">kubernetes_labels_pod_template_hash<span class="c">:</span><span class="s">57c68dc88c</span>,</div>
<div class="car" style="top:817.7px"></div>
<div class="jl mono" style="top:812.3px;line-height:19px">kubernetes_namespace_name<span class="c">:</span><span class="s">zinc-cp1</span>,</div>
<div class="car" style="top:844.8px"></div>
<div class="jl mono" style="top:839.4px;line-height:19px">kubernetes_pod_id<span class="c">:</span><span class="s">55ee6dae-a678-4337-9aa2-0bd7cc6b5012</span>,</div>
<div class="car" style="top:871.9px"></div>
<div class="jl mono" style="top:866.5px;line-height:19px">kubernetes_pod_name<span class="c">:</span><span class="s">zinc-cp-57c68dc88c-nxw94</span>,</div>
<div class="car" style="top:899.0px"></div>
<div class="jl mono" style="top:893.6px;line-height:19px">level<span class="c">:</span><span class="s">info</span>,</div>
<div class="car" style="top:926.1px"></div>
<div class="jl mono" style="top:920.7px;line-height:19px">message<span class="c">:</span><span class="m">/api/Bhargav_organization_29/_bulk</span>,</div>
<div class="car" style="top:953.1px"></div>
<div class="jl mono" style="top:947.8px;line-height:19px">method<span class="c">:</span><span class="s">POST</span>,</div>
<div class="car" style="top:980.2px"></div>
<div class="jl mono" style="top:974.8px;line-height:19px">stream<span class="c">:</span><span class="s">stderr</span>,</div>
<div class="car" style="top:1007.3px"></div>
<div class="jl mono" style="top:1001.9px;line-height:19px">took<span class="c">:</span><span class="n">61</span></div>
<div class="a mono" style="left:523.5px;top:1027.5px;font-size:15.9px;line-height:19px;color:#222">}</div>
<div class="a" style="left:502px;top:1058px;width:1483px;height:1px;background:#e3e8eb"></div>
<div class="a" style="left:502px;top:1060px;width:4px;height:21.5px;background:repeating-linear-gradient(180deg,#6d8de6 0 1.5px,#a9bdf2 1.5px 2.5px)"></div>
<svg class="a" style="left:532px;top:1067px" width="9" height="13" viewBox="0 0 9 13"><path d="M1.5 1.5 L6.5 6.5 L1.5 11.5" stroke="#222" stroke-width="1.9" fill="none"/></svg>
<div class="a mono" style="left:555px;top:1064.5px;font-size:15.92px;transform:scaleY(1.1);transform-origin:0 13.7px;line-height:19px;color:#222;white-space:pre">2025-12-16 20:49:31.112</div>
<div class="a" style="left:856px;top:1059px;width:1129px;height:23px;overflow:hidden"><div class="jl mono" style="left:0;top:6.5px;line-height:19px;color:#222"><span style="color:#aab">{</span>"_timestamp"<span class="c">:</span><span class="n">1765898371112123</span>,"code"<span class="c">:</span><span class="n">200</span>,"kubernetes_annotations_kubernetes_io_psp"<span class="c">:</span><span class="s">"eks.privileged"</span>,"kubernetes_container_hash"<span class="c">:</span><span class="s">"058694856476.dkr.ecr.us-west-2.amazonaws.com/zinc-cp@sha256:56e216b3d61bd282846e3f6d1bd9cb82f83b90b7e401ad0afc0052aa3f15715"</span></div></div>
<div class="a" style="left:0;top:1082px;width:1999px;height:7.5px;background:linear-gradient(90deg,#d8e1e5 0%,#d3dde2 60%,#c6d3d9 100%)"></div>
<div class="a" style="left:0;top:1089.5px;width:1999px;height:1.5px;background:#3f6a48"></div>
</body></html>
